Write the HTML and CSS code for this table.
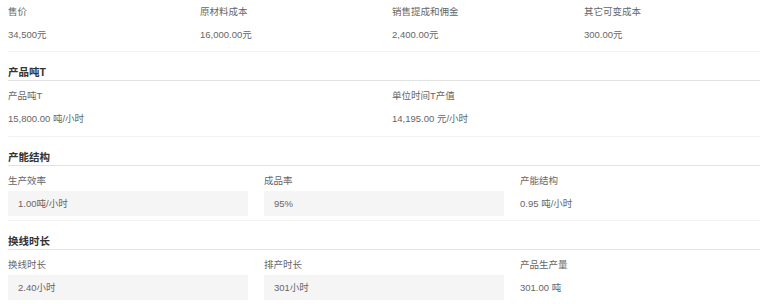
FILE: index.html
```html
<!DOCTYPE html>
<html lang="zh-CN">
<head>
<meta charset="utf-8">
<link rel="stylesheet" href="styles.css">
</head>
<body>
<div class="page">
  <div class="fields fields--first cols-4">
    <div class="field"><div class="label">售价</div><div class="value">34,500元</div></div>
    <div class="field"><div class="label">原材料成本</div><div class="value">16,000.00元</div></div>
    <div class="field"><div class="label">销售提成和佣金</div><div class="value">2,400.00元</div></div>
    <div class="field"><div class="label">其它可变成本</div><div class="value">300.00元</div></div>
  </div>

  <div class="section-head"><h2 class="title">产品吨T</h2></div>
  <div class="fields cols-2">
    <div class="field"><div class="label">产品吨T</div><div class="value">15,800.00 吨/小时</div></div>
    <div class="field"><div class="label">单位时间T产值</div><div class="value">14,195.00 元/小时</div></div>
  </div>

  <div class="section-head"><h2 class="title">产能结构</h2></div>
  <div class="fields fields--tight cols-3">
    <div class="field"><div class="label">生产效率</div><div class="value value--box">1.00吨/小时</div></div>
    <div class="field"><div class="label">成品率</div><div class="value value--box">95%</div></div>
    <div class="field"><div class="label">产能结构</div><div class="value">0.95 吨/小时</div></div>
  </div>

  <div class="section-head"><h2 class="title">换线时长</h2></div>
  <div class="fields cols-3">
    <div class="field"><div class="label">换线时长</div><div class="value value--box">2.40小时</div></div>
    <div class="field"><div class="label">排产时长</div><div class="value value--box">301小时</div></div>
    <div class="field"><div class="label">产品生产量</div><div class="value">301.00 吨</div></div>
  </div>
</div>
</body>
</html>
```

FILE: styles.css
```css
* { box-sizing: border-box; }
html, body { margin: 0; padding: 0; background: #fff; }
body {
  font-family: "Liberation Sans", "Noto Sans CJK SC", sans-serif;
  font-size: 9.5px;
  color: #666;
}
.page {
  padding: 0 8px;
  overflow: hidden;
}
.fields {
  display: grid;
  margin: 0 -8px;
  padding: 5px 0 5px;
}
.fields--first { padding-top: 2px; padding-bottom: 4px; }
.fields--tight { padding-bottom: 4px; }
.cols-4 { grid-template-columns: repeat(4, 1fr); }
.cols-3 { grid-template-columns: repeat(3, 1fr); }
.cols-2 { grid-template-columns: repeat(2, 1fr); }
.field { padding: 0 8px; }
.label {
  height: 20px;
  line-height: 20px;
  color: #666;
}
.value {
  height: 25px;
  line-height: 25px;
  color: #666;
}
.value--box {
  background: #f5f5f5;
  padding-left: 10px;
}
.section-head {
  border-top: 1px solid #f2f2f2;
  border-bottom: 1px solid #e2e2e2;
  padding-top: 12px;
}
.title {
  margin: 0;
  font-size: 10.5px;
  font-weight: bold;
  line-height: 16px;
  height: 16px;
  color: #333;
}
```
